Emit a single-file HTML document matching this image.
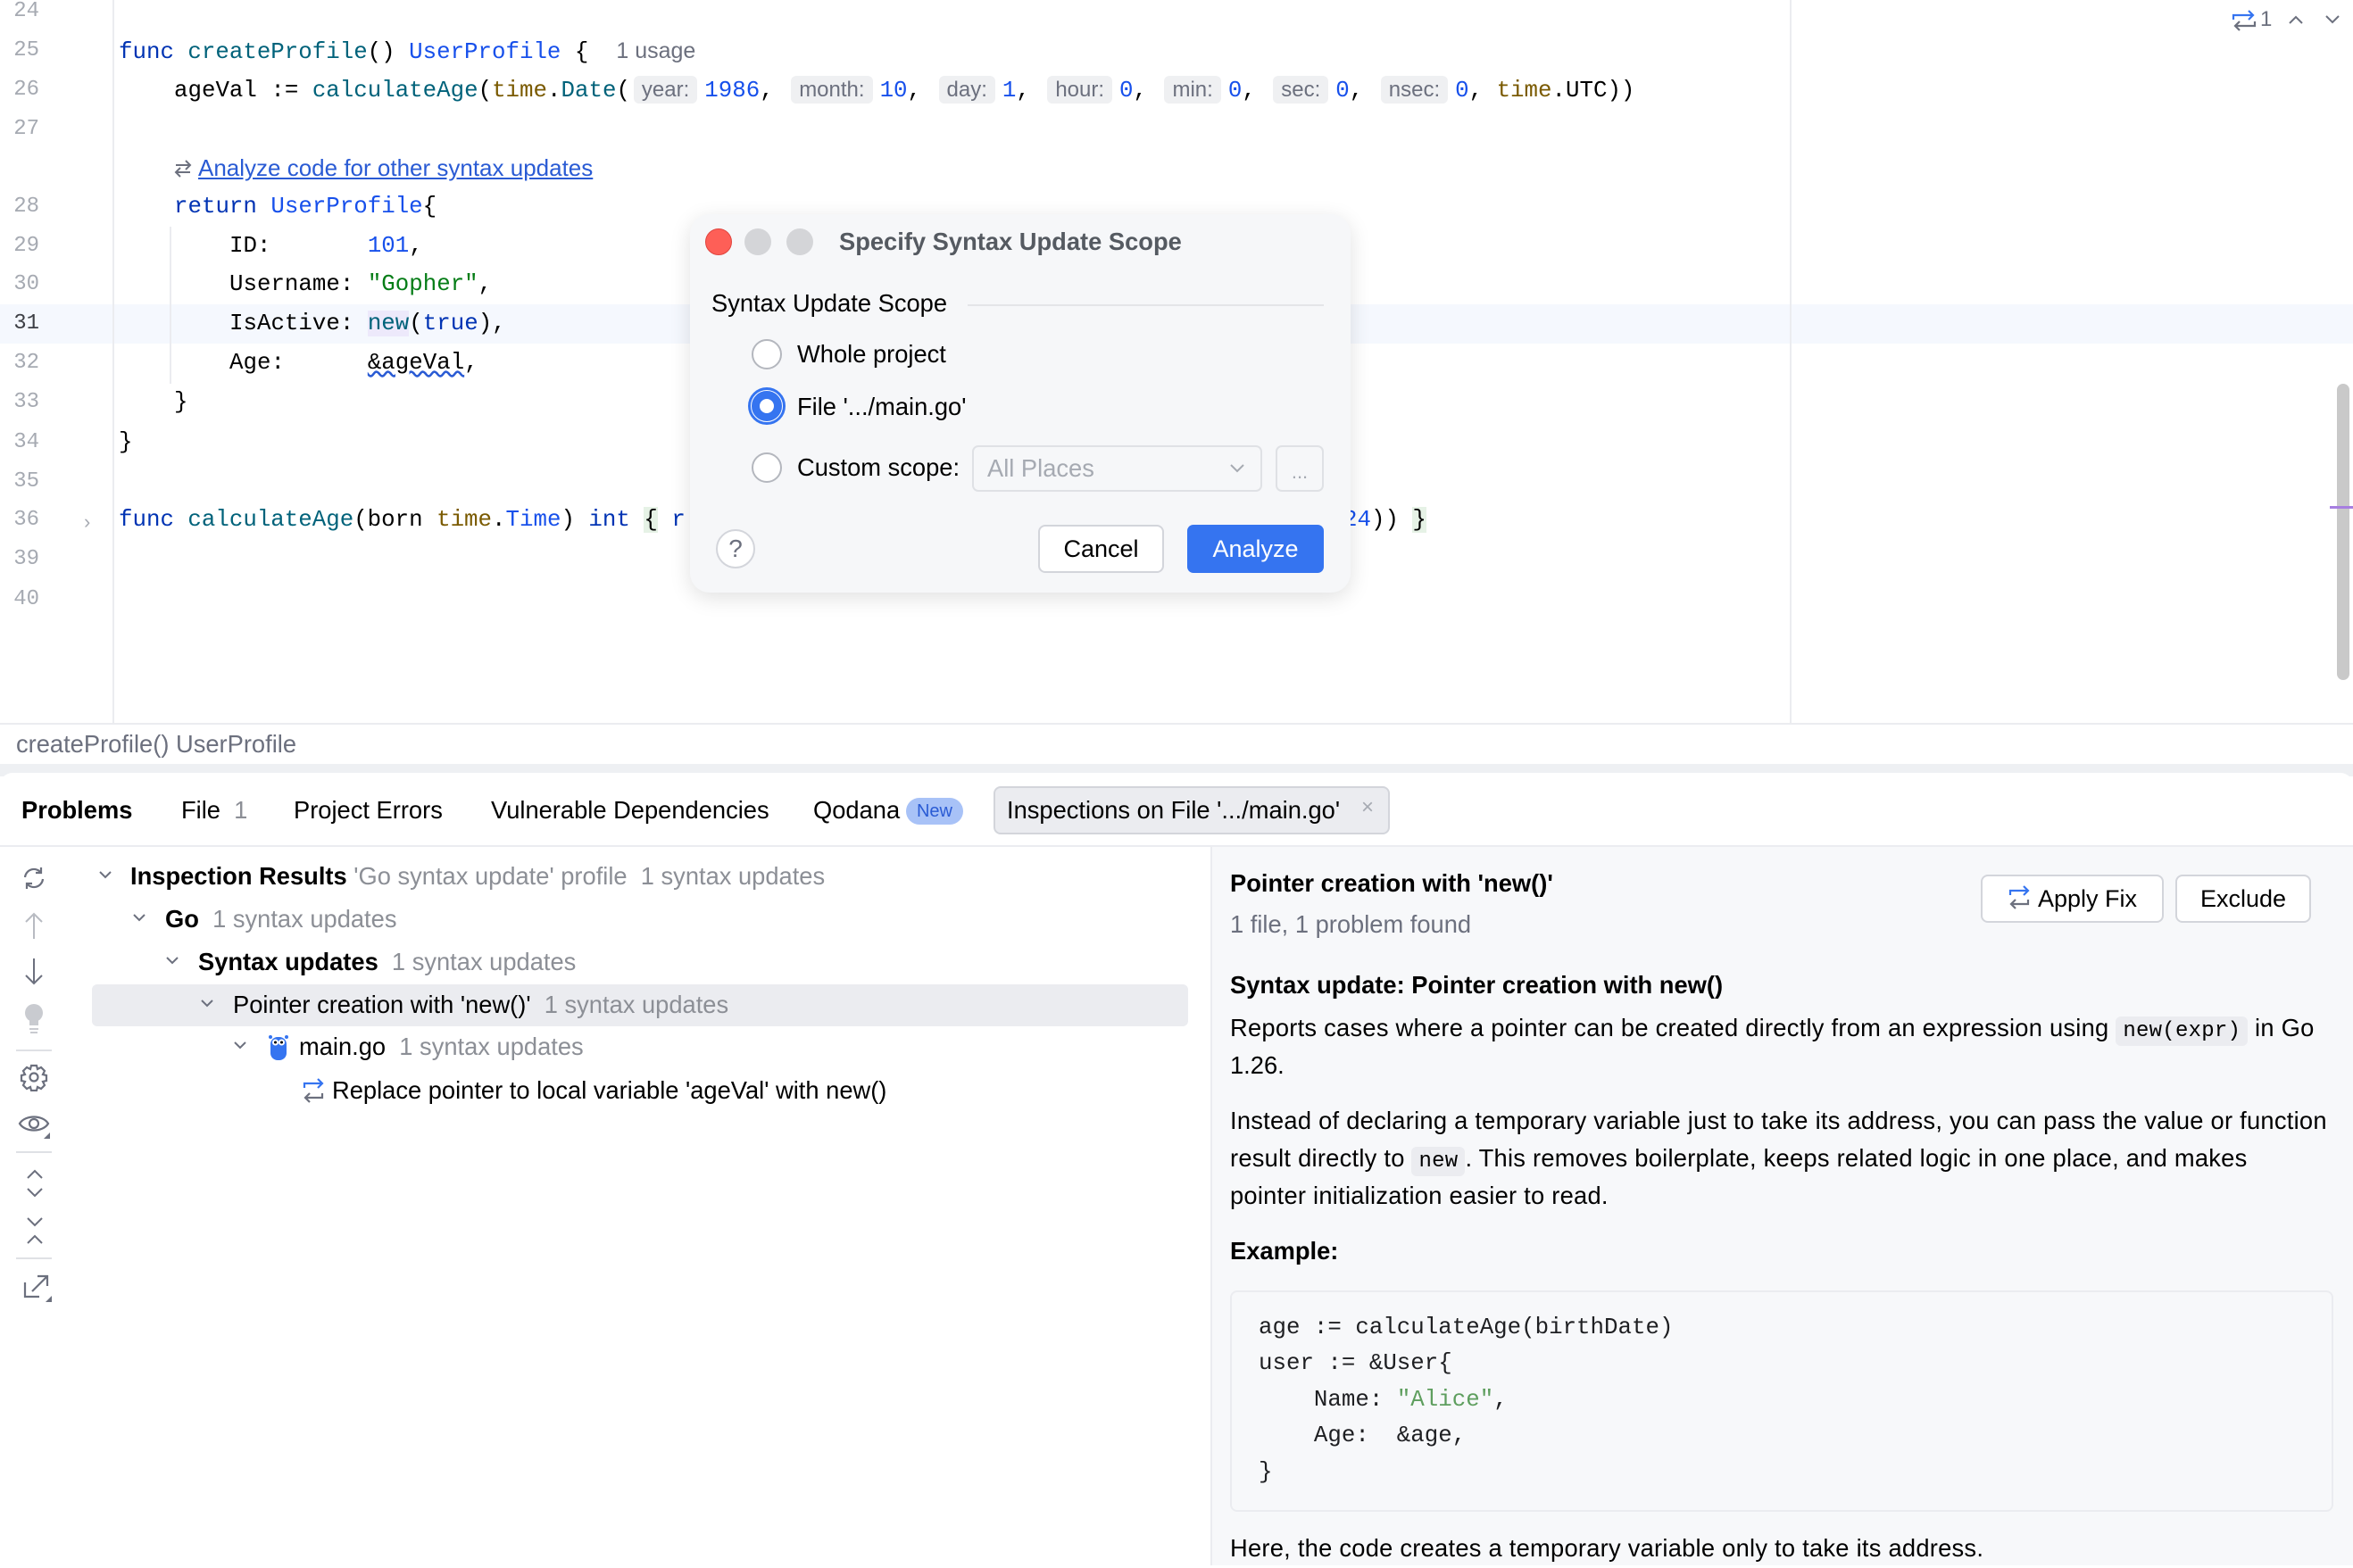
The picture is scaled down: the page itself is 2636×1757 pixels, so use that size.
<!DOCTYPE html>
<html><head><meta charset="utf-8">
<style>
*{margin:0;padding:0;box-sizing:border-box}
body{width:2636px;height:1754px;background:#fff;position:relative;overflow:hidden;font-family:"Liberation Sans",sans-serif;color:#000}
.a{position:absolute;white-space:pre}
.m{font-family:"Liberation Mono",monospace;font-size:25.8px;line-height:44px;height:44px}
.ln{position:absolute;width:44px;text-align:right;font-family:"Liberation Mono",monospace;font-size:24px;line-height:44px;color:#a6aab2;left:0}
.s{font-size:27.3px;line-height:44px;height:44px}
.kw{color:#0033b3}.fn{color:#00627a}.ty{color:#1750eb}.pk{color:#7a5a00}.nu{color:#1750eb}.st{color:#067d17}
.hint{font-family:"Liberation Sans",sans-serif;font-size:24px;color:#6c707e;background:#eff0f2;border-radius:6px;padding:2px 9px;margin:0 8px 0 4px}
.g{color:#8c8f96}
.btn{position:absolute;border:2px solid #d3d5db;border-radius:8px;background:#fff;font-size:27px;text-align:center}
.code{font-family:"Liberation Mono",monospace;font-size:24px;background:#ebecf0;border-radius:6px;padding:3px 8px}
.ic{position:absolute}
</style></head><body>

<!-- editor -->
<div class="a" style="left:0;top:341px;width:2636px;height:44px;background:#f5f8fe"></div>
<div class="a" style="left:126px;top:0;width:2px;height:812px;background:#ebecf0"></div>
<div class="a" style="left:2005px;top:0;width:2px;height:812px;background:#ebecf0"></div>
<div class="a" style="left:190px;top:254px;width:2px;height:176px;background:#ebecf0"></div>

<div class="ln" style="top:-9px">24</div>
<div class="ln" style="top:35px">25</div>
<div class="ln" style="top:79px">26</div>
<div class="ln" style="top:123px">27</div>
<div class="ln" style="top:210px">28</div>
<div class="ln" style="top:254px">29</div>
<div class="ln" style="top:297px">30</div>
<div class="ln" style="top:341px;color:#3d3f45">31</div>
<div class="ln" style="top:385px">32</div>
<div class="ln" style="top:429px">33</div>
<div class="ln" style="top:474px">34</div>
<div class="ln" style="top:518px">35</div>
<div class="ln" style="top:561px">36</div>
<div class="ln" style="top:605px">39</div>
<div class="ln" style="top:650px">40</div>

<div class="a m" style="left:133px;top:35px"><span class="kw">func</span> <span class="fn">createProfile</span>() <span class="ty">UserProfile</span> {  <span style="font-family:'Liberation Sans';font-size:25px;color:#6c707e">1 usage</span></div>
<div class="a m" style="left:195px;top:79px">ageVal := <span class="fn">calculateAge</span>(<span class="pk">time</span>.<span class="fn">Date</span>(<span class="hint">year:</span><span class="nu">1986</span>, <span class="hint">month:</span><span class="nu">10</span>, <span class="hint">day:</span><span class="nu">1</span>, <span class="hint">hour:</span><span class="nu">0</span>, <span class="hint">min:</span><span class="nu">0</span>, <span class="hint">sec:</span><span class="nu">0</span>, <span class="hint">nsec:</span><span class="nu">0</span>, <span class="pk">time</span>.UTC))</div>
<svg class="ic" style="left:194px;top:176px" width="22" height="26" viewBox="0 0 22 26"><path d="M3 9h15M14 4l5 5-5 5M19 17H4M8 12l-5 5 5 5" fill="none" stroke="#6c707e" stroke-width="2"/></svg>
<div class="a" style="left:222px;top:170px;font-size:26px;line-height:36px;color:#2a5bd4;text-decoration:underline">Analyze code for other syntax updates</div>
<div class="a m" style="left:195px;top:210px"><span class="kw">return</span> <span class="ty">UserProfile</span>{</div>
<div class="a m" style="left:257px;top:254px">ID:       <span class="nu">101</span>,</div>
<div class="a m" style="left:257px;top:297px">Username: <span class="st">"Gopher"</span>,</div>
<div class="a m" style="left:257px;top:341px">IsActive: <span class="fn" style="background:#ede9fb">new</span>(<span class="kw">true</span>),</div>
<div class="a m" style="left:257px;top:385px">Age:      <span style="text-decoration:underline wavy #2a5bd4">&amp;ageVal</span>,</div>
<div class="a m" style="left:195px;top:429px">}</div>
<div class="a m" style="left:133px;top:474px">}</div>
<div class="a" style="left:94px;top:572px;color:#a6aab2;font-size:22px">›</div>
<div class="a m" style="left:133px;top:561px"><span class="kw">func</span> <span class="fn">calculateAge</span>(born <span class="pk">time</span>.<span class="ty">Time</span>) <span class="kw">int</span> <span style="background:#e6f2e6">{</span> <span class="kw">r</span></div>
<div class="a m" style="left:1505px;top:561px"><span class="nu">24</span>)) <span style="background:#e6f2e6">}</span></div>

<!-- top right -->
<svg class="ic" style="left:2500px;top:10px" width="28" height="26" viewBox="0 0 28 26"><path d="M2 12V7h22M19 2l5 5-5 5" fill="none" stroke="#3574f0" stroke-width="2.2"/><path d="M26 14v5H4M9 14l-5 5 5 5" fill="none" stroke="#6c707e" stroke-width="2.2"/></svg>
<div class="a" style="left:2532px;top:8px;font-size:24px;color:#6c707e">1</div>
<svg class="ic" style="left:2563px;top:16px" width="18" height="12"><path d="M2 10l7-7 7 7" fill="none" stroke="#6c707e" stroke-width="2"/></svg>
<svg class="ic" style="left:2604px;top:16px" width="18" height="12"><path d="M2 2l7 7 7-7" fill="none" stroke="#6c707e" stroke-width="2"/></svg>
<div class="a" style="left:2618px;top:430px;width:14px;height:332px;background:#c9c9c9;border-radius:7px"></div>
<div class="a" style="left:2610px;top:567px;width:26px;height:3px;background:#a77fe0"></div>

<!-- breadcrumb -->
<div class="a" style="left:0;top:810px;width:2636px;height:2px;background:#ebecf0"></div>
<div class="a s" style="left:18px;top:812px;color:#6c707e">createProfile() UserProfile</div>
<div class="a" style="left:0;top:856px;width:2636px;height:14px;background:#eef0f3"></div>

<!-- bottom panel -->
<div class="a" style="left:0;top:866px;width:2636px;height:888px;background:#fff;border-radius:14px 14px 0 0"></div>
<div class="a s" style="left:24px;top:886px;font-weight:bold">Problems</div>
<div class="a s" style="left:203px;top:886px">File <span class="g">&nbsp;1</span></div>
<div class="a s" style="left:329px;top:886px">Project Errors</div>
<div class="a s" style="left:550px;top:886px">Vulnerable Dependencies</div>
<div class="a s" style="left:911px;top:886px">Qodana</div>
<div class="a" style="left:1015px;top:894px;width:64px;height:30px;border-radius:15px;background:#a8c2f7;color:#2a5bd4;font-size:20px;line-height:30px;text-align:center">New</div>
<div class="a" style="left:1113px;top:881px;width:444px;height:54px;border:2px solid #d3d5db;border-radius:8px;background:#ebecf0"></div>
<div class="a s" style="left:1128px;top:886px">Inspections on File '.../main.go'</div>
<div class="a" style="left:1525px;top:891px;color:#a6aab2;font-size:24px">×</div>
<div class="a" style="left:0;top:947px;width:2636px;height:2px;background:#ebecf0"></div>

<!-- left toolbar -->
<svg class="ic" style="left:22px;top:968px" width="32" height="32" viewBox="0 0 32 32" fill="none" stroke="#6c707e" stroke-width="2.2"><path d="M6 15a10 10 0 0 1 18-5M26 17a10 10 0 0 1-18 5"/><path d="M24 4v6h-6M8 28v-6h6"/></svg>
<svg class="ic" style="left:26px;top:1020px" width="24" height="34"><path d="M12 32V4M3 13l9-9 9 9" fill="none" stroke="#b8bbc2" stroke-width="2"/></svg>
<svg class="ic" style="left:26px;top:1072px" width="24" height="34"><path d="M12 2v28M3 21l9 9 9-9" fill="none" stroke="#6c707e" stroke-width="2"/></svg>
<svg class="ic" style="left:26px;top:1124px" width="24" height="36"><circle cx="12" cy="11" r="10" fill="#c9cbd0"/><rect x="7" y="19" width="10" height="6" fill="#c9cbd0"/><path d="M7 29h10M8 33h8" stroke="#c9cbd0" stroke-width="2"/></svg>
<div class="a" style="left:18px;top:1176px;width:40px;height:2px;background:#dfe1e5"></div>
<svg class="ic" style="left:22px;top:1191px" width="32" height="32" viewBox="0 0 32 32" fill="none" stroke="#6c707e" stroke-width="2.2"><path d="M13 3h6l1 4 4-2 4 4-2 4 4 1v6l-4 1 2 4-4 4-4-2-1 4h-6l-1-4-4 2-4-4 2-4-4-1v-6l4-1-2-4 4-4 4 2z"/><circle cx="16" cy="16" r="4.5"/></svg>
<svg class="ic" style="left:20px;top:1247px" width="38" height="30" viewBox="0 0 38 30"><path d="M2 12C8 2 28 2 34 12 28 22 8 22 2 12z" fill="none" stroke="#6c707e" stroke-width="2.2"/><circle cx="18" cy="12" r="5" fill="none" stroke="#6c707e" stroke-width="2.2"/><path d="M36 22v7h-7z" fill="#6c707e"/></svg>
<div class="a" style="left:18px;top:1290px;width:40px;height:2px;background:#dfe1e5"></div>
<svg class="ic" style="left:28px;top:1310px" width="22" height="34"><path d="M3 10l8-8 8 8M3 22l8 8 8-8" fill="none" stroke="#6c707e" stroke-width="2"/></svg>
<svg class="ic" style="left:28px;top:1362px" width="22" height="34"><path d="M3 3l8 8 8-8M3 31l8-8 8 8" fill="none" stroke="#6c707e" stroke-width="2"/></svg>
<div class="a" style="left:18px;top:1409px;width:40px;height:2px;background:#dfe1e5"></div>
<svg class="ic" style="left:24px;top:1425px" width="34" height="34"><path d="M4 12v16h16M12 22L28 6M18 5h11v11" fill="none" stroke="#6c707e" stroke-width="2.2"/><path d="M34 27v7h-7z" fill="#6c707e"/></svg>

<!-- tree -->
<div class="a" style="left:103px;top:1103px;width:1228px;height:47px;background:#ebecf0;border-radius:6px"></div>
<svg class="ic" style="left:110px;top:975px" width="16" height="12"><path d="M2 2l6 6 6-6" fill="none" stroke="#6c707e" stroke-width="2"/></svg>
<div class="a s" style="left:146px;top:960px"><b>Inspection Results</b><span class="g"> 'Go syntax update' profile  1 syntax updates</span></div>
<svg class="ic" style="left:148px;top:1023px" width="16" height="12"><path d="M2 2l6 6 6-6" fill="none" stroke="#6c707e" stroke-width="2"/></svg>
<div class="a s" style="left:185px;top:1008px"><b>Go</b><span class="g">  1 syntax updates</span></div>
<svg class="ic" style="left:185px;top:1071px" width="16" height="12"><path d="M2 2l6 6 6-6" fill="none" stroke="#6c707e" stroke-width="2"/></svg>
<div class="a s" style="left:222px;top:1056px"><b>Syntax updates</b><span class="g">  1 syntax updates</span></div>
<svg class="ic" style="left:224px;top:1119px" width="16" height="12"><path d="M2 2l6 6 6-6" fill="none" stroke="#6c707e" stroke-width="2"/></svg>
<div class="a s" style="left:261px;top:1104px">Pointer creation with 'new()'<span class="g">  1 syntax updates</span></div>
<svg class="ic" style="left:261px;top:1166px" width="16" height="12"><path d="M2 2l6 6 6-6" fill="none" stroke="#6c707e" stroke-width="2"/></svg>
<svg class="ic" style="left:300px;top:1158px" width="24" height="32" viewBox="0 0 24 32"><rect x="3" y="4" width="18" height="26" rx="8" fill="#3574f0"/><circle cx="8.5" cy="10" r="3.5" fill="#fff"/><circle cx="15.5" cy="10" r="3.5" fill="#fff"/><circle cx="8.5" cy="10" r="1.5" fill="#000"/><circle cx="15.5" cy="10" r="1.5" fill="#000"/><rect x="1" y="2" width="4" height="4" rx="2" fill="#3574f0"/><rect x="19" y="2" width="4" height="4" rx="2" fill="#3574f0"/></svg>
<div class="a s" style="left:335px;top:1151px">main.go<span class="g">  1 syntax updates</span></div>
<svg class="ic" style="left:338px;top:1207px" width="26" height="32" viewBox="0 0 26 32"><path d="M3 12V7h20M18 2l5 5-5 5" fill="none" stroke="#3574f0" stroke-width="2.2"/><path d="M23 18v5H4M9 18l-5 5 5 5" fill="none" stroke="#6c707e" stroke-width="2.2"/></svg>
<div class="a s" style="left:372px;top:1200px">Replace pointer to local variable 'ageVal' with new()</div>

<!-- right panel -->
<div class="a" style="left:1356px;top:949px;width:2px;height:805px;background:#ebecf0"></div>
<div class="a" style="left:1358px;top:949px;width:1278px;height:805px;background:#f7f8fa"></div>
<div class="a s" style="left:1378px;top:968px;font-weight:bold">Pointer creation with 'new()'</div>
<div class="a s" style="left:1378px;top:1014px;color:#6c707e">1 file, 1 problem found</div>
<div class="btn" style="left:2219px;top:980px;width:205px;height:54px;line-height:50px"><svg style="vertical-align:-4px;margin-right:8px" width="26" height="28" viewBox="0 0 26 28"><path d="M3 11V6h20M18 1l5 5-5 5" fill="none" stroke="#3574f0" stroke-width="2.2"/><path d="M23 16v5H4M9 16l-5 5 5 5" fill="none" stroke="#6c707e" stroke-width="2.2"/></svg>Apply Fix</div>
<div class="btn" style="left:2437px;top:980px;width:152px;height:54px;line-height:50px">Exclude</div>
<div class="a s" style="left:1378px;top:1082px;font-weight:bold">Syntax update: Pointer creation with new()</div>
<div class="a s" style="left:1378px;top:1130px;letter-spacing:0.25px">Reports cases where a pointer can be created directly from an expression using <span class="code">new(expr)</span> in Go</div>
<div class="a s" style="left:1378px;top:1172px">1.26.</div>
<div class="a s" style="left:1378px;top:1234px;letter-spacing:0.25px">Instead of declaring a temporary variable just to take its address, you can pass the value or function</div>
<div class="a s" style="left:1378px;top:1276px;letter-spacing:0.25px">result directly to <span class="code">new</span>. This removes boilerplate, keeps related logic in one place, and makes</div>
<div class="a s" style="left:1378px;top:1318px;letter-spacing:0.25px">pointer initialization easier to read.</div>
<div class="a s" style="left:1378px;top:1380px;font-weight:bold">Example:</div>
<div class="a" style="left:1378px;top:1446px;width:1236px;height:248px;background:#f7f8fa;border:2px solid #ebecf0;border-radius:8px"></div>
<div class="a" style="left:1410px;top:1468px;font-family:'Liberation Mono',monospace;font-size:25.8px;line-height:40.4px;color:#1e1f22">age := calculateAge(birthDate)
user := &amp;User{
    Name: <span style="color:#5e9e5e">"Alice"</span>,
    Age:  &amp;age,
}</div>
<div class="a s" style="left:1378px;top:1713px;letter-spacing:0.25px">Here, the code creates a temporary variable only to take its address.</div>

<!-- dialog -->
<div class="a" style="left:773px;top:240px;width:740px;height:424px;background:#f6f7f9;border-radius:22px;box-shadow:0 6px 24px rgba(0,0,0,.12)"></div>
<div class="a" style="left:790px;top:256px;width:30px;height:30px;border-radius:50%;background:#fe5f57;border:1px solid #e0443e"></div>
<div class="a" style="left:834px;top:256px;width:30px;height:30px;border-radius:50%;background:#d4d5d8"></div>
<div class="a" style="left:881px;top:256px;width:30px;height:30px;border-radius:50%;background:#d4d5d8"></div>
<div class="a s" style="left:940px;top:249px;font-weight:bold;color:#555a61">Specify Syntax Update Scope</div>
<div class="a s" style="left:797px;top:318px">Syntax Update Scope</div>
<div class="a" style="left:1084px;top:341px;width:399px;height:2px;background:#e4e5e8"></div>
<div class="a" style="left:842px;top:380px;width:34px;height:34px;border-radius:50%;border:2px solid #b4b7be;background:#fff"></div>
<div class="a s" style="left:893px;top:375px">Whole project</div>
<div class="a" style="left:838px;top:434px;width:42px;height:42px;border-radius:50%;border:3px solid #3574f0;background:#fff"></div>
<div class="a" style="left:842px;top:438px;width:34px;height:34px;border-radius:50%;border:9px solid #3574f0;background:#fff"></div>
<div class="a s" style="left:893px;top:434px">File '.../main.go'</div>
<div class="a" style="left:842px;top:507px;width:34px;height:34px;border-radius:50%;border:2px solid #b4b7be;background:#fff"></div>
<div class="a s" style="left:893px;top:502px">Custom scope:</div>
<div class="a" style="left:1089px;top:499px;width:325px;height:52px;border:2px solid #dfe1e5;border-radius:7px;background:#f6f7f9"></div>
<div class="a s" style="left:1106px;top:503px;color:#a6aab2">All Places</div>
<svg class="ic" style="left:1377px;top:519px" width="18" height="12"><path d="M2 2l7 7 7-7" fill="none" stroke="#a6aab2" stroke-width="2"/></svg>
<div class="a" style="left:1429px;top:499px;width:54px;height:52px;border:2px solid #dfe1e5;border-radius:7px;background:#f6f7f9;color:#a6aab2;text-align:center;font-size:22px;line-height:56px">...</div>
<div class="a" style="left:802px;top:593px;width:44px;height:44px;border-radius:50%;border:2px solid #d3d5db;background:#fff;text-align:center;font-size:28px;line-height:40px;color:#6c707e">?</div>
<div class="btn" style="left:1163px;top:588px;width:141px;height:54px;line-height:50px">Cancel</div>
<div class="a" style="left:1330px;top:588px;width:153px;height:54px;border-radius:7px;background:#3574f0;color:#fff;font-size:27px;line-height:54px;text-align:center">Analyze</div>
</body></html>
